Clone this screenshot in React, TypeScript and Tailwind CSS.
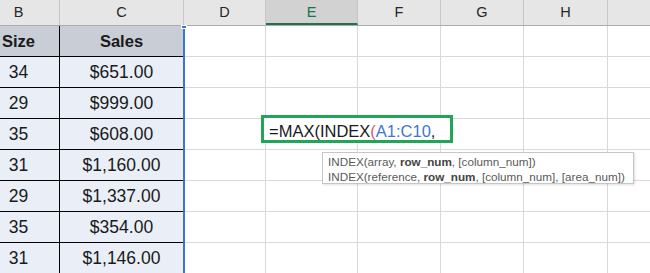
import React from 'react';

const cols = [
  { key: 'D', w: 'w-[81px]' },
  { key: 'E', w: 'w-[92px]' },
  { key: 'F', w: 'w-[83px]' },
  { key: 'G', w: 'w-[83px]' },
  { key: 'H', w: 'w-[84px]' },
  { key: 'I', w: 'w-[80px]' },
];

const rows = [
  ['34', '$651.00'],
  ['29', '$999.00'],
  ['35', '$608.00'],
  ['31', '$1,160.00'],
  ['29', '$1,337.00'],
  ['35', '$354.00'],
  ['31', '$1,146.00'],
];

function EmptyCells() {
  return (
    <>
      {cols.map((c) => (
        <div key={c.key} className={`${c.w} shrink-0 border-r border-b border-[#d9d9d9]`} />
      ))}
    </>
  );
}

export default function App() {
  return (
    <div className="relative w-[650px] h-[273px] overflow-hidden bg-white font-['Liberation_Sans',Arial,sans-serif] text-[#1a1a1a]">
      <div className="-ml-[22px] flex flex-col">
        {/* column headers */}
        <div className="flex h-[26px] bg-[#e6e6e6] border-b border-[#ababab] text-[14.5px] text-[#262626]">
          <div className="w-[82px] shrink-0 border-r border-[#c6c6c6] grid place-items-center">B</div>
          <div className="w-[124px] shrink-0 border-r border-[#c6c6c6] grid place-items-center">C</div>
          <div className="w-[82px] shrink-0 border-r border-[#c6c6c6] grid place-items-center">D</div>
          <div className="w-[92px] shrink-0 border-r border-[#c6c6c6] bg-[#d2d2d2] border-b-2 border-b-[#217346] text-[#217346] grid place-items-center pt-[2px]">
            E
          </div>
          <div className="w-[83px] shrink-0 border-r border-[#c6c6c6] grid place-items-center">F</div>
          <div className="w-[83px] shrink-0 border-r border-[#c6c6c6] grid place-items-center">G</div>
          <div className="w-[84px] shrink-0 border-r border-[#c6c6c6] grid place-items-center">H</div>
          <div className="w-[80px] shrink-0" />
        </div>

        {/* table header row */}
        <div className="flex h-[31px]">
          <div className="w-[82px] shrink-0 bg-[#c8cdd6] border-r border-b border-black grid place-items-center font-bold text-[16.5px]">
            Size
          </div>
          <div className="w-[123px] shrink-0 bg-[#c8cdd6] border-b border-black grid place-items-center font-bold text-[16.5px]">
            Sales
          </div>
          <div className="w-[2px] shrink-0 bg-[#3a76cf]" />
          <EmptyCells />
        </div>

        {rows.map(([size, sales], i) => (
          <div key={i} className="flex h-[31px]">
            <div className="w-[82px] shrink-0 bg-[#e9eef7] border-r border-b border-black grid place-items-center text-[17.5px]">
              {size}
            </div>
            <div className="w-[123px] shrink-0 bg-[#e9eef7] border-b border-black grid place-items-center text-[17.5px]">
              {sales}
            </div>
            <div className="w-[2px] shrink-0 bg-[#3a76cf]" />
            <EmptyCells />
          </div>
        ))}
      </div>

      {/* selection handle */}
      <div className="absolute left-[181px] top-[25px] w-[6px] h-[4px] bg-[#3a76cf] border border-white" />

      {/* in-cell editor */}
      <div className="absolute left-[261px] top-[115px] w-[192px] h-[28px] border-[3px] border-[#21a658] bg-white flex items-end pl-[5px] pb-[1px] text-[16.5px] leading-none whitespace-nowrap">
        <span>=MAX(INDEX</span>
        <span className="text-[#e2577a]">(</span>
        <span className="text-[#3f76d6]">A1:C10</span>
        <span>,</span>
      </div>

      {/* function tooltip */}
      <div className="absolute left-[322px] top-[152px] w-[312px] h-[32px] bg-white border border-[#c6c6c6] shadow-[1px_1px_2px_rgba(0,0,0,0.12)] px-[5px] pt-[1px] text-[11.7px] leading-[15px] text-[#5a5a5a] whitespace-nowrap">
        <div>
          INDEX(array, <b className="text-[#444]">row_num</b>, [column_num])
        </div>
        <div>
          INDEX(reference, <b className="text-[#444]">row_num</b>, [column_num], [area_num])
        </div>
      </div>
    </div>
  );
}
